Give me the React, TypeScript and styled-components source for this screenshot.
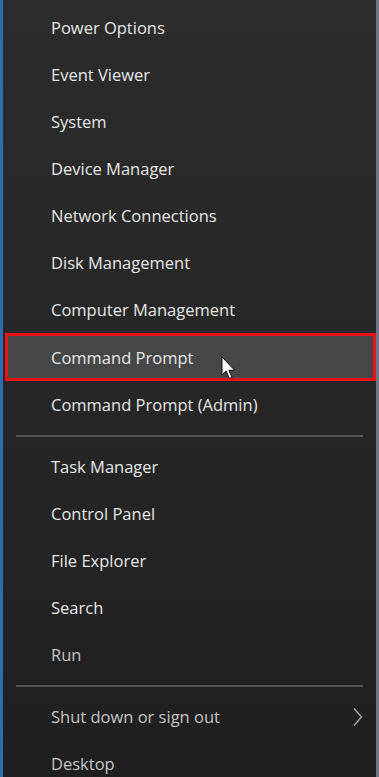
import React from "react";
import styled, { createGlobalStyle } from "styled-components";

const GlobalStyle = createGlobalStyle`
  html, body {
    margin: 0;
    padding: 0;
    background: #262626;
  }
  * {
    box-sizing: border-box;
  }
`;

const Menu = styled.div`
  width: 379px;
  height: 777px;
  overflow: hidden;
  display: flex;
  flex-direction: column;
  padding-top: 4px;
  background: linear-gradient(to bottom, #2c2c2c 0%, #262626 55%, #1f1f1f 100%);
  border-left: 3px solid #2f6cb0;
  border-right: 3px solid #6c7688;
  font-family: "Open Sans", "Noto Sans", "Liberation Sans", sans-serif;
`;

const Item = styled.div<{ $dim?: boolean; $selected?: boolean }>`
  position: relative;
  height: 47px;
  flex-shrink: 0;
  display: flex;
  align-items: center;
  justify-content: space-between;
  padding: 0 13px 0 48px;
  font-size: 16.5px;
  color: ${(p) => (p.$dim ? "#c4c4c4" : "#e6e6e6")};
  ${(p) =>
    p.$selected &&
    `
    height: 48px;
    margin: 0 0 0 2px;
    padding-left: 43px;
    background: #474747;
    border: 3px solid #ea1219;
  `}
`;

const Separator = styled.div`
  flex-shrink: 0;
  height: 15px;
  display: flex;
  align-items: center;
  padding: 0 13px;
  &::after {
    content: "";
    flex: 1;
    height: 2px;
    background: #555555;
  }
`;

const Cursor = styled.svg`
  position: absolute;
  left: 213px;
  top: 20px;
  z-index: 2;
`;

const Chevron = styled.svg`
  flex-shrink: 0;
`;

const topItems = [
  "Power Options",
  "Event Viewer",
  "System",
  "Device Manager",
  "Network Connections",
  "Disk Management",
  "Computer Management",
];

const midItems = ["Task Manager", "Control Panel", "File Explorer", "Search", "Run"];

export default function App() {
  return (
    <>
      <GlobalStyle />
      <Menu>
        {topItems.map((t) => (
          <Item key={t}>{t}</Item>
        ))}
        <Item $selected>
          Command Prompt
          <Cursor width="16" height="25" viewBox="0 0 16 25">
            <path
              d="M1 1 L1 19 L5.2 15 L8.4 22.5 L11 21.4 L7.9 14.2 L13.6 14.2 Z"
              fill="#ffffff"
              stroke="#111111"
              strokeWidth="1"
              strokeLinejoin="round"
            />
          </Cursor>
        </Item>
        <Item>Command Prompt (Admin)</Item>
        <Separator />
        {midItems.map((t) => (
          <Item key={t} $dim={t === "Run"}>
            {t}
          </Item>
        ))}
        <Separator />
        <Item $dim>
          Shut down or sign out
          <Chevron width="10" height="20" viewBox="0 0 10 20">
            <path d="M1 1.5 L8.5 10 L1 18.5" fill="none" stroke="#a8a8a8" strokeWidth="1.4" />
          </Chevron>
        </Item>
        <Item $dim>Desktop</Item>
      </Menu>
    </>
  );
}
